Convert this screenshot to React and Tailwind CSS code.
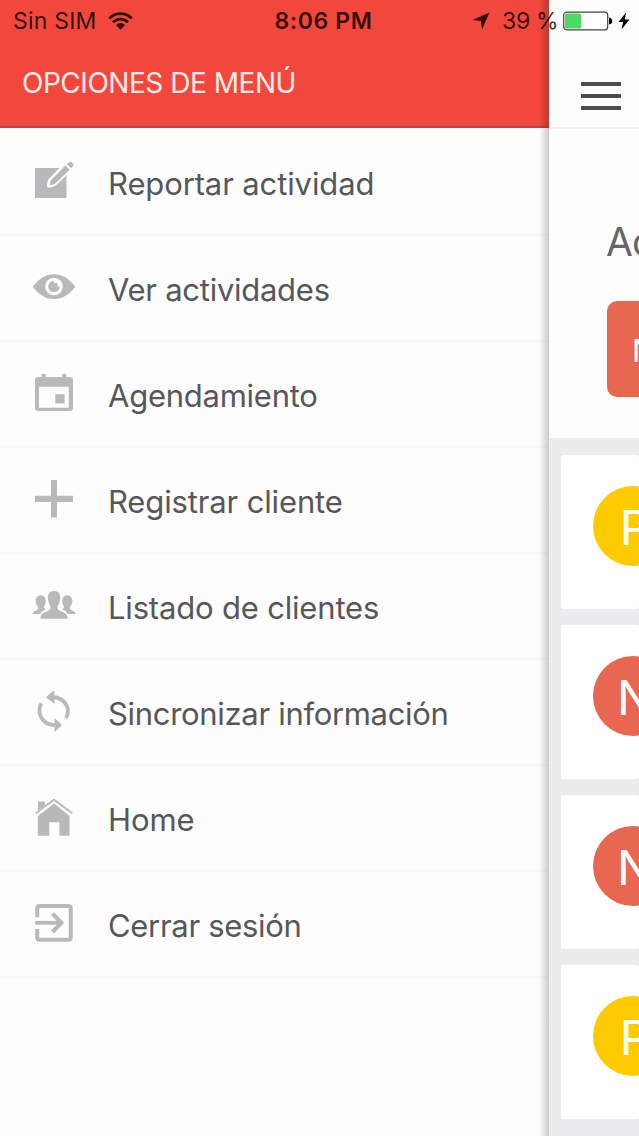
import React from "react";
import clsx from "clsx";

// ─── Icons ───────────────────────────────────────────────────────────────────
function Icon({ children }) {
  return (
    <svg
      viewBox="0 0 44 44"
      className="h-11 w-11 shrink-0 fill-[#b9b9bb]"
      aria-hidden="true"
    >
      {children}
    </svg>
  );
}

const icons = {
  edit: (
    <>
      <rect x="3" y="8" width="31.5" height="30" />
      <path
        d="M16.2 27.6 Q14.6 27.2 15 24 L16.2 19.6 L31 4.4 L38.4 11.4 L23.4 25.8 L19 27.4 Z"
        className="fill-[#fefdfe]"
      />
      <path d="M17.8 25.2 L18.5 20.8 L33.4 5.6 L37.6 9.8 L22.2 24.6 Z" />
      <path d="M35 4.2 L37.5 1.9 Q38.4 1.2 39.2 2 L41.2 4 Q42 4.8 41.3 5.7 L39 8.2 Z" />
    </>
  ),
  eye: (
    <>
      <path d="M.8 20.7 C6.5 13 13.5 8.2 22 8.2 C30.5 8.2 37.5 13 43.3 20.7 C37.5 28.5 30.5 33 22 33 C13.5 33 6.5 28.5 .8 20.7 Z" />
      <circle cx="22" cy="20.5" r="8.8" className="fill-[#fefdfe]" />
      <circle cx="22" cy="20.5" r="5.8" />
      <path d="M22 14.5 V20.5 H28 A6 6 0 0 0 22 14.5 Z" className="fill-[#fefdfe]" />
      <circle cx="23.4" cy="19.2" r="2.4" />
    </>
  ),
  calendar: (
    <>
      <path
        fillRule="evenodd"
        d="M6 5 H38 Q41 5 41 8 V36 Q41 39 38 39 H6 Q3 39 3 36 V8 Q3 5 6 5 Z M7 14.7 V35.7 H36.8 V14.7 Z"
      />
      <rect x="9.6" y="2" width="4.2" height="4" />
      <rect x="30.2" y="2" width="4.2" height="4" />
      <rect x="23.3" y="22.2" width="9.3" height="9.3" />
    </>
  ),
  plus: <path d="M19 2 H25 V17.7 H41 V23.9 H25 V39.5 H19 V23.9 H3 V17.7 H19 Z" />,
  people: (
    <>
      <path d="M8.8 11.2 Q13.8 11.6 13.8 17 Q13.6 20.5 12 22.6 Q11.8 24.6 14 25.6 Q10 26.5 8.4 30 H.6 Q.8 27.4 4 26.4 Q7 25.4 6 23 Q3.6 20.5 3.6 17 Q3.8 11.4 8.8 11.2 Z" />
      <path d="M35.2 11.2 Q30.2 11.6 30.2 17 Q30.4 20.5 32 22.6 Q32.2 24.6 30 25.6 Q34 26.5 35.6 30 H43.4 Q43.2 27.4 40 26.4 Q37 25.4 38 23 Q40.4 20.5 40.4 17 Q40.2 11.4 35.2 11.2 Z" />
      <path d="M22 7 Q28 7 28 13 Q28.8 14.4 27.6 17.2 Q27.2 20 25.6 21.8 V24.6 Q26 26.6 30 27.8 Q35.5 29.2 35.8 34.8 H8.4 Q8.6 29.2 14 27.8 Q18.2 26.6 18.4 24.6 V21.8 Q16.8 20 16.4 17.2 Q15.2 14.4 16 13 Q16 7 22 7 Z" />
    </>
  ),
  sync: (
    <>
      <g fill="none" strokeWidth="3.8" className="stroke-[#b9b9bb]">
        <path d="M9.4 13.4 C5.5 20 7 35 24 35.2" />
        <path d="M34 28 C38.5 20 35 8 20 7" />
      </g>
      <path d="M22.2 0 L14 7.2 L22.6 14 Z" />
      <path d="M22.5 28 L30 35 L22.5 42.2 Z" />
    </>
  ),
  home: (
    <>
      <path d="M22 7.6 L37.6 20 V39.8 H27.4 V26.3 H17.3 V39.8 H5.8 V20 Z" />
      <path d="M6 5.6 H13 V9 L6 14.6 Z" />
      <path
        d="M3.8 17.2 L22 3.8 L40.2 17.2"
        fill="none"
        strokeWidth="2"
        className="stroke-[#b9b9bb]"
      />
      <path
        d="M4.6 19.2 L22 6.2 L39.4 19.2"
        fill="none"
        strokeWidth="1.5"
        className="stroke-[#fefdfe]"
      />
    </>
  ),
  exit: (
    <g fill="none" strokeWidth="4" className="stroke-[#b9b9bb]">
      <path d="M5.2 15.3 V6.5 Q5.2 4.1 7.6 4.1 H36.2 Q38.8 4.1 38.8 6.6 V35.4 Q38.8 37.8 36.2 37.8 H7.6 Q5.2 37.8 5.2 35.4 V27" />
      <path d="M3.2 20.8 H29" strokeWidth="3.8" />
      <path d="M20.5 11.7 L29.4 20.8 L20.5 30" />
    </g>
  ),
};

// ─── Data ────────────────────────────────────────────────────────────────────
const menuItems = [
  { label: "Reportar actividad", icon: "edit", text: "tracking-[-0.12px]" },
  { label: "Ver actividades", icon: "eye", text: "tracking-[-0.27px]" },
  { label: "Agendamiento", icon: "calendar", text: "tracking-[-0.25px]" },
  { label: "Registrar cliente", icon: "plus", text: "tracking-[-0.14px]" },
  { label: "Listado de clientes", icon: "people", text: "tracking-[-0.18px]" },
  { label: "Sincronizar información", icon: "sync", text: "tracking-[-0.31px]" },
  { label: "Home", icon: "home", text: "tracking-[-0.1px]" },
  { label: "Cerrar sesión", icon: "exit", text: "tracking-[-0.31px]" },
];

const activities = [
  { id: 1, initial: "P", color: "bg-[#fecb00]" },
  { id: 2, initial: "N", color: "bg-[#e76751]" },
  { id: 3, initial: "N", color: "bg-[#e76751]" },
  { id: 4, initial: "P", color: "bg-[#fecb00]" },
];

// ─── Status bar ──────────────────────────────────────────────────────────────
function StatusBar() {
  return (
    <div className="absolute inset-x-0 top-0 z-20 grid h-[42px] grid-cols-3 items-center text-[23px] text-black/80">
      <div className="flex items-center pl-[13px]">
        <span className="w-[84px] whitespace-nowrap tracking-[0.2px]">Sin SIM</span>
        <svg viewBox="0 0 26 18" className="ml-[11px] h-[18px] w-[25px]">
          <g fill="none" stroke="currentColor" strokeWidth="2.9">
            <path d="M1.3 6.3 C8 -.2 18 -.2 24.7 6.3" />
            <path d="M5.2 10.2 C9.5 5.9 16.5 5.9 20.8 10.2" />
          </g>
          <path d="M8.3 13.2 Q13 9.2 17.7 13.2 L13 18 Z" fill="currentColor" />
        </svg>
      </div>
      <span className="pl-[8px] text-center font-semibold tracking-[0.6px] whitespace-nowrap">
        8:06 PM
      </span>
      <div className="flex items-center justify-end pr-[9px]">
        <svg viewBox="0 0 18 18" className="mr-[12px] h-[18px] w-[18px] shrink-0">
          <path d="M17.5 .5 L10 17.5 L9 9 L.5 8 Z" fill="currentColor" />
        </svg>
        <span className="mr-[6px] w-[55px] whitespace-nowrap tracking-[-0.3px]">39 %</span>
        <svg viewBox="0 0 50 20" className="h-5 w-[50px] shrink-0">
          <rect
            x=".7"
            y="1.2"
            width="44"
            height="17.6"
            rx="3"
            className="fill-white stroke-[#444]"
            strokeWidth="1.2"
          />
          <rect x="2" y="2.6" width="16.3" height="15" rx="1.5" className="fill-[#4cd964]" />
          <path d="M46 6.5 Q49.2 7 49.2 10 Q49.2 13 46 13.5 Z" fill="black" />
        </svg>
        <svg viewBox="0 0 12 18" className="ml-[5px] h-[18px] w-3 shrink-0">
          <path d="M8 .5 L.5 10 H5.2 L3.5 17.5 L11.5 7.5 H6.8 Z" fill="black" />
        </svg>
      </div>
    </div>
  );
}

// ─── Side menu ───────────────────────────────────────────────────────────────
function SideMenu() {
  return (
    <aside className="relative flex w-[549px] shrink-0 flex-col bg-[#fefdfe]">
      <header className="flex h-32 items-end border-b-2 border-[#a94a4c] bg-[#f1473c] pb-[26px] pl-[22px]">
        <h1 className="text-[28px] leading-[34px] tracking-[-0.47px] text-white/90">
          OPCIONES DE MENÚ
        </h1>
      </header>
      <nav className="pt-0.5">
        {menuItems.map((item) => (
          <a
            key={item.label}
            className="flex h-[106px] items-center border-b-2 border-[#f8f7f9] pl-8"
          >
            <Icon>{icons[item.icon]}</Icon>
            <span
              className={clsx(
                "ml-8 pt-[3px] text-[31px] leading-10 whitespace-nowrap text-[#57575a]",
                item.text,
              )}
            >
              {item.label}
            </span>
          </a>
        ))}
      </nav>
      {/* Shadow cast by the page that slid to the right */}
      <div className="absolute inset-y-0 right-0 w-2.5 bg-linear-to-r from-black/0 via-black/10 to-black/20" />
    </aside>
  );
}

// ─── Page behind the menu ────────────────────────────────────────────────────
function ActivitiesPage() {
  return (
    <main className="w-[90px] shrink-0 overflow-hidden bg-[#ececee]">
      <div className="h-[129px] border-b-2 border-[#efeff1] bg-[#fefdfe] pt-[82px] pl-8">
        <button type="button" aria-label="Menú" className="flex w-10 flex-col gap-2">
          <span className="h-1 bg-[#4c4c4e]" />
          <span className="h-1 bg-[#4c4c4e]" />
          <span className="h-1 bg-[#4c4c4e]" />
        </button>
      </div>
      <section className="h-[309px] bg-[#fefdfe] pt-[88px] pl-[57px]">
        <h2 className="w-40 text-[39px] leading-[50px] tracking-[-1px] text-[#666668]">
          Actividades
        </h2>
        <button
          type="button"
          className="mt-[34px] ml-px flex h-24 w-60 items-center rounded-[10px] bg-[#e76751] pt-1 pl-[25px] text-[31px] text-white"
        >
          Nueva
        </button>
      </section>
      <ul className="flex flex-col gap-4 pt-[17px] pl-3">
        {activities.map((activity) => (
          <li key={activity.id} className="h-[154px] rounded-[2px] bg-[#fefefe] pt-[31px] pl-8">
            <div
              className={clsx(
                "flex h-20 w-20 items-center justify-center rounded-full pt-[4px] pl-1 text-5xl text-white",
                activity.color,
              )}
            >
              {activity.initial}
            </div>
          </li>
        ))}
      </ul>
    </main>
  );
}

export default function App() {
  return (
    <div className="relative flex h-[1136px] w-[639px] overflow-hidden bg-[#fefdfe] font-[Inter,'Liberation_Sans',sans-serif]">
      <StatusBar />
      <SideMenu />
      <ActivitiesPage />
    </div>
  );
}
